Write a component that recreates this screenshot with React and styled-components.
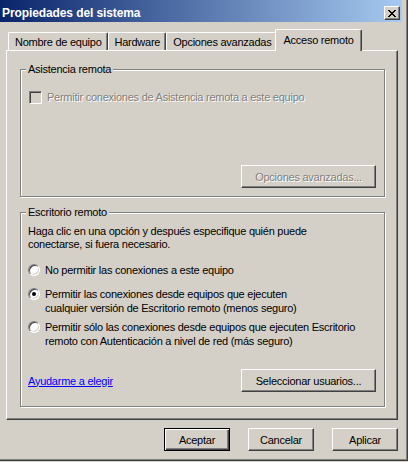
import styled, { createGlobalStyle, css } from 'styled-components'

const GlobalStyle = createGlobalStyle`
  html, body { margin: 0; padding: 0; background: #d4d0c8; }
  body {
    font-family: "Liberation Sans", Arial, sans-serif;
    font-size: 11px;
    letter-spacing: -0.25px;
    color: #000;
  }
  * { box-sizing: border-box; }
`

/* ── Window frame ── */
const Window = styled.div`
  width: 408px;
  height: 461px;
  background: #d4d0c8;
  border-right: 1px solid #404040;
  border-bottom: 1px solid #404040;
  box-shadow: inset -1px -1px 0 #808080;
  display: flex;
  flex-direction: column;
`

const TitleBar = styled.div`
  height: 22px;
  margin-right: 5px;
  padding: 4px 2px 0 2px;
  background: linear-gradient(to right, #0a246a, #a6caf0);
  display: flex;
  align-items: center;
  justify-content: space-between;
`

const Title = styled.span`
  color: #fff;
  font-weight: bold;
  font-size: 12px;
  letter-spacing: -0.1px;
  line-height: 14px;
`

const CloseBtn = styled.div`
  width: 16px;
  height: 14px;
  background: #d4d0c8;
  border: 1px solid;
  border-color: #fff #404040 #404040 #fff;
  box-shadow: inset -1px -1px 0 #808080;
  display: flex;
  align-items: center;
  justify-content: center;
  padding-right: 1px;
  svg { display: block; }
`

const Body = styled.div`
  flex: 1;
  display: flex;
  flex-direction: column;
  padding: 7px 9px 0 6px;
`

/* ── Tabs ── */
const TabStrip = styled.div`
  display: flex;
  align-items: flex-end;
  padding-left: 2px;
`

const Tab = styled.div`
  position: relative;
  display: flex;
  align-items: center;
  line-height: 13px;
  white-space: nowrap;
  background: #d4d0c8;
  border-left: 1px solid #fff;
  border-top: 1px solid #fff;
  border-right: 1px solid #404040;
  border-radius: 2px 2px 0 0;
  box-shadow: inset -1px 0 0 #808080;

  ${({ $active }) => $active ? css`
    height: 22px;
    padding: 0 7px 0 7px;
    margin: 0 -2px -1px -2px;
    z-index: 2;
  ` : css`
    height: 18px;
    padding: 1px 5px 0 6px;
    z-index: 0;
  `}
`

const Panel = styled.div`
  height: 370px;
  border: 1px solid;
  border-color: #fff #404040 #404040 #fff;
  box-shadow: inset -1px -1px 0 #808080;
  padding: 18px 12px 12px 13px;
  display: flex;
  flex-direction: column;
  gap: 15px;
`

/* ── Group boxes ── */
const Group = styled.div`
  height: ${({ $h }) => $h}px;
  border: 1px solid #808080;
  box-shadow: inset 1px 1px 0 #fff, 1px 1px 0 #fff;
  display: flex;
  flex-direction: column;
  padding: ${({ $pad }) => $pad};
`

const Legend = styled.div`
  align-self: flex-start;
  margin: -7px 0 0 ${({ $shift }) => $shift}px;
  padding: 0 2px;
  line-height: 13px;
  background: #d4d0c8;
`

const Row = styled.div`
  display: flex;
  align-items: flex-start;
  gap: 5px;
  margin-top: ${({ $mt }) => $mt}px;
`

const Label = styled.span`
  line-height: ${({ $lh }) => $lh || 13}px;
  ${({ $disabled }) => $disabled && css`
    color: #808080;
    text-shadow: 1px 1px 0 #fff;
  `}
`

const Check = styled.span`
  flex-shrink: 0;
  width: 13px;
  height: 13px;
  border: 1px solid;
  border-color: #808080 #fff #fff #808080;
  box-shadow: inset 1px 1px 0 #404040, inset -1px -1px 0 #d4d0c8;
  background: ${({ $disabled }) => ($disabled ? '#d4d0c8' : '#fff')};
`

const Radio = styled.span`
  flex-shrink: 0;
  width: 12px;
  height: 12px;
  margin-top: 1px;
  border-radius: 50%;
  border: 1px solid;
  border-color: #808080 #fff #fff #808080;
  box-shadow: inset 1px 1px 0 #404040, inset -1px -1px 0 #d4d0c8;
  background: #fff;
  display: flex;
  align-items: center;
  justify-content: center;

  ${({ $checked }) => $checked && css`
    &::after {
      content: '';
      width: 4px;
      height: 4px;
      border-radius: 50%;
      background: #000;
    }
  `}
`

const Desc = styled.p`
  margin: 6px 0 0;
  line-height: 13px;
`

const Footer = styled.div`
  margin-top: auto;
  display: flex;
  align-items: center;
  justify-content: space-between;
`

const HelpLink = styled.a`
  color: #0000ff;
  text-decoration: underline;
  cursor: pointer;
`

/* ── Buttons ── */
const Btn = styled.button`
  font: inherit;
  letter-spacing: inherit;
  color: #000;
  width: ${({ $w }) => $w}px;
  height: 23px;
  padding: 0;
  background: #d4d0c8;
  border: 1px solid;
  border-color: #fff #404040 #404040 #fff;
  box-shadow: inset -1px -1px 0 #808080;
  display: flex;
  align-items: center;
  justify-content: center;

  &:disabled {
    color: #808080;
    text-shadow: 1px 1px 0 #fff;
  }

  ${({ $default }) => $default && css`
    border: 1px solid #000;
    box-shadow: inset 1px 1px 0 #fff, inset -1px -1px 0 #404040, inset -2px -2px 0 #808080;
  `}
`

const EndBtn = styled(Btn)`
  align-self: flex-end;
  margin-top: auto;
`

const ButtonRow = styled.div`
  margin-top: 8px;
  display: flex;
  justify-content: flex-end;
  gap: 18px;
`

const CloseGlyph = () => (
  <svg width="8" height="7" viewBox="0 0 8 7" shapeRendering="crispEdges">
    <path
      fill="#000"
      d="M0 0h2v1H0z M6 0h2v1H6z M1 1h2v1H1z M5 1h2v1H5z M2 2h4v1H2z M3 3h2v1H3z M2 4h4v1H2z M1 5h2v1H1z M5 5h2v1H5z M0 6h2v1H0z M6 6h2v1H6z"
    />
  </svg>
)

const tabs = ['Nombre de equipo', 'Hardware', 'Opciones avanzadas', 'Acceso remoto']

const App = () => (
  <>
    <GlobalStyle />
    <Window>
      <TitleBar>
        <Title>Propiedades del sistema</Title>
        <CloseBtn><CloseGlyph /></CloseBtn>
      </TitleBar>

      <Body>
        <TabStrip>
          {tabs.map((t) => (
            <Tab key={t} $active={t === 'Acceso remoto'}>{t}</Tab>
          ))}
        </TabStrip>

        <Panel>
          {/* Asistencia remota */}
          <Group $h={128} $pad="0 8px 8px 8px">
            <Legend $shift={-3}>Asistencia remota</Legend>
            <Row $mt={15}>
              <Check $disabled />
              <Label $disabled>Permitir conexiones de Asistencia remota a este equipo</Label>
            </Row>
            <EndBtn $w={135} disabled>Opciones avanzadas...</EndBtn>
          </Group>

          {/* Escritorio remoto */}
          <Group $h={195} $pad="0 8px 14px 7px">
            <Legend $shift={-2}>Escritorio remoto</Legend>
            <Desc>
              Haga clic en una opción y después especifique quién puede<br />
              conectarse, si fuera necesario.
            </Desc>
            <Row $mt={12}>
              <Radio />
              <Label $lh={14}>No permitir las conexiones a este equipo</Label>
            </Row>
            <Row $mt={10}>
              <Radio $checked />
              <Label $lh={14}>
                Permitir las conexiones desde equipos que ejecuten<br />
                cualquier versión de Escritorio remoto (menos seguro)
              </Label>
            </Row>
            <Row $mt={5}>
              <Radio />
              <Label $lh={14}>
                Permitir sólo las conexiones desde equipos que ejecuten Escritorio<br />
                remoto con Autenticación a nivel de red (más seguro)
              </Label>
            </Row>
            <Footer>
              <HelpLink>Ayudarme a elegir</HelpLink>
              <Btn $w={135}>Seleccionar usuarios...</Btn>
            </Footer>
          </Group>
        </Panel>

        <ButtonRow>
          <Btn $w={66} $default>Aceptar</Btn>
          <Btn $w={66}>Cancelar</Btn>
          <Btn $w={66}>Aplicar</Btn>
        </ButtonRow>
      </Body>
    </Window>
  </>
)

export default App
